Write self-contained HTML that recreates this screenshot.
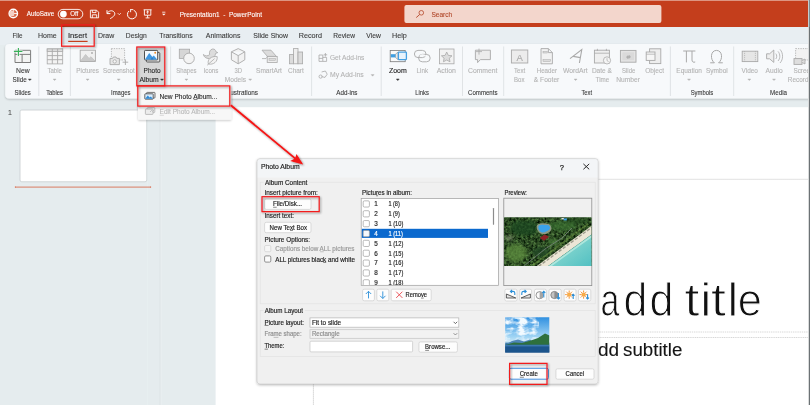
<!DOCTYPE html>
<html><head><meta charset="utf-8"><title>PowerPoint - Photo Album</title>
<style>html,body{margin:0;padding:0;background:#fff;overflow:hidden}svg{display:block;opacity:0.999}text{font-family:"Liberation Sans",sans-serif;white-space:pre}</style>
</head><body>
<svg width="810" height="405" viewBox="0 0 810 405" font-family="'Liberation Sans', sans-serif">
<defs>
<filter id="sh" x="-10%" y="-10%" width="120%" height="130%"><feGaussianBlur in="SourceAlpha" stdDeviation="1.7"/><feOffset dy="1.4"/><feComponentTransfer><feFuncA type="linear" slope="0.3"/></feComponentTransfer><feMerge><feMergeNode/><feMergeNode in="SourceGraphic"/></feMerge></filter>
<filter id="shs" x="-10%" y="-20%" width="120%" height="150%"><feGaussianBlur in="SourceAlpha" stdDeviation="1.2"/><feOffset dy="0.8"/><feComponentTransfer><feFuncA type="linear" slope="0.22"/></feComponentTransfer><feMerge><feMergeNode/><feMergeNode in="SourceGraphic"/></feMerge></filter>
<filter id="shr" x="-20%" y="-20%" width="140%" height="140%"><feGaussianBlur in="SourceAlpha" stdDeviation="0.9"/><feOffset dx="0.6" dy="0.8"/><feComponentTransfer><feFuncA type="linear" slope="0.45"/></feComponentTransfer><feMerge><feMergeNode/><feMergeNode in="SourceGraphic"/></feMerge></filter>
<filter id="trees" x="0" y="0" width="100%" height="100%" color-interpolation-filters="sRGB"><feTurbulence type="fractalNoise" baseFrequency="0.42" numOctaves="3" seed="7" result="n"/><feColorMatrix in="n" type="matrix" values="0 0.58 0 0 -0.12  0 0.76 0 0 -0.09  0 0.45 0 0 -0.09  0 0 0 0 1"/></filter>
<filter id="clouds" x="0" y="0" width="100%" height="100%" color-interpolation-filters="sRGB"><feTurbulence type="fractalNoise" baseFrequency="0.11 0.2" numOctaves="3" seed="11" result="n"/><feColorMatrix in="n" type="matrix" values="0 0 0 0 0.95  0 0 0 0 0.98  0 0 0 0 1  0 3.4 0 0 -1.35"/></filter>
<filter id="blur1"><feGaussianBlur stdDeviation="0.7"/></filter>
<filter id="blur2"><feGaussianBlur stdDeviation="1.4"/></filter>
<clipPath id="cpPhoto"><rect x="504.2" y="217.6" width="87.2" height="48.4"/></clipPath>
<clipPath id="cpLay"><rect x="505.2" y="317.3" width="44.1" height="35.2"/></clipPath>
<clipPath id="cpList"><rect x="361.5" y="199" width="136.5" height="86"/></clipPath>
<clipPath id="cpRib"><rect x="0" y="44" width="808" height="56"/></clipPath>
<linearGradient id="sky" x1="0" y1="0" x2="0" y2="1"><stop offset="0" stop-color="#2f8fe0"/><stop offset="0.55" stop-color="#9fd4f4"/><stop offset="0.7" stop-color="#cfeaf6"/><stop offset="0.72" stop-color="#3f7fae"/><stop offset="1" stop-color="#1f4f86"/></linearGradient>
<linearGradient id="sea" x1="0" y1="0" x2="1" y2="1"><stop offset="0" stop-color="#a4e4d6"/><stop offset="1" stop-color="#50bfc2"/></linearGradient>
</defs>
<rect x="0.00" y="0.00" width="810.00" height="405.00" fill="#E5ECEE"/>
<rect x="0.00" y="0.00" width="810.00" height="27.00" fill="#C43E1C"/>
<rect x="0.00" y="0.00" width="810.00" height="0.90" fill="#e0a08e"/>
<rect x="0.00" y="27.00" width="810.00" height="18.00" fill="#E8EEF2"/>
<circle cx="13.3" cy="13.5" r="4.2" fill="#d8694c" stroke="#fff" stroke-width="1.4"/>
<path d="M13.3 9.4 V13.5 H17.4" fill="none" stroke="#fff" stroke-width="0.9"/>
<rect x="9.6" y="11" width="4.6" height="5" rx="0.8" fill="#f3cfc4"/>
<text x="26.80" y="16.40" font-size="6.4" fill="#fff" stroke="#fff" stroke-width="0.1" textLength="27.50" lengthAdjust="spacingAndGlyphs" >AutoSave</text>
<rect x="58.20" y="9.40" width="24.60" height="9.40" fill="none" rx="4.7" stroke="#fff" stroke-width="0.9"/>
<circle cx="63.4" cy="14.1" r="3.35" fill="#fff"/>
<text x="70.20" y="16.40" font-size="6.4" fill="#fff" stroke="#fff" stroke-width="0.1" textLength="8.10" lengthAdjust="spacingAndGlyphs" >Off</text>
<path d="M90.4 10.2 H96.6 L98.6 12.2 V17.8 H90.4 Z M92.3 10.2 V12.6 H96 V10.2 M92.3 17.8 V14.8 H96.7 V17.8" fill="none" stroke="#fff" stroke-width="0.9"/>
<path d="M107 10.2 V13.6 H110.4 M107.2 13.4 C108.5 10.6 112.6 9.8 114.3 12.3 C115.8 14.6 113.8 16.6 110.2 18.6" fill="none" stroke="#fff" stroke-width="1.0"/>
<path d="M117.8 13.2 L119.3 14.7 L120.8 13.2" fill="none" stroke="#fff" stroke-width="0.8"/>
<path d="M133.6 10.2 A4.5 4.5 0 1 1 129 11" fill="none" stroke="#fff" stroke-width="1.0"/>
<path d="M130.6 9.2 V12.2 M130.4 9.6 H133.2" fill="none" stroke="#fff" stroke-width="0.9"/>
<path d="M143.6 9.8 H151.6 M144.4 9.8 V15.2 H150.8 V9.8 M147.6 15.2 V17.8 M145.6 17.9 H149.6 M147.6 11 V13.8 M146.4 12.2 L147.6 11 L148.8 12.2" fill="none" stroke="#fff" stroke-width="0.9"/>
<path d="M162.2 12.2 H165.4" fill="none" stroke="#fff" stroke-width="0.8"/>
<path d="M162 13.8 L163.8 15.6 L165.6 13.8 Z" fill="#fff"/>
<text x="179.80" y="16.60" font-size="6.8" fill="#fff" stroke="#fff" stroke-width="0.1" textLength="82.20" lengthAdjust="spacingAndGlyphs" >Presentation1  -  PowerPoint</text>
<rect x="404.40" y="5.00" width="257.00" height="18.00" fill="#F3D6CC" rx="2"/>
<circle cx="421.3" cy="12.8" r="2.3" fill="none" stroke="#B5482A" stroke-width="0.8"/>
<line x1="419.60" y1="14.60" x2="416.20" y2="17.60" stroke="#B5482A" stroke-width="0.9" />
<text x="431.40" y="16.60" font-size="6.7" fill="#B1482B" stroke="#B1482B" stroke-width="0.1" textLength="20.90" lengthAdjust="spacingAndGlyphs" >Search</text>
<rect x="62.00" y="27.00" width="32.00" height="18.00" fill="#E1E7EB"/>
<text x="12.50" y="38.10" font-size="7.2" fill="#3b3b3b" stroke="#3b3b3b" stroke-width="0.1" textLength="10.10" lengthAdjust="spacingAndGlyphs" >File</text>
<text x="38.00" y="38.10" font-size="7.2" fill="#3b3b3b" stroke="#3b3b3b" stroke-width="0.1" textLength="18.70" lengthAdjust="spacingAndGlyphs" >Home</text>
<text x="68.00" y="38.10" font-size="7.2" fill="#222" stroke="#222" stroke-width="0.1" textLength="19.00" lengthAdjust="spacingAndGlyphs" >Insert</text>
<text x="98.00" y="38.10" font-size="7.2" fill="#3b3b3b" stroke="#3b3b3b" stroke-width="0.1" textLength="16.20" lengthAdjust="spacingAndGlyphs" >Draw</text>
<text x="125.80" y="38.10" font-size="7.2" fill="#3b3b3b" stroke="#3b3b3b" stroke-width="0.1" textLength="21.00" lengthAdjust="spacingAndGlyphs" >Design</text>
<text x="159.20" y="38.10" font-size="7.2" fill="#3b3b3b" stroke="#3b3b3b" stroke-width="0.1" textLength="33.40" lengthAdjust="spacingAndGlyphs" >Transitions</text>
<text x="205.80" y="38.10" font-size="7.2" fill="#3b3b3b" stroke="#3b3b3b" stroke-width="0.1" textLength="34.60" lengthAdjust="spacingAndGlyphs" >Animations</text>
<text x="253.30" y="38.10" font-size="7.2" fill="#3b3b3b" stroke="#3b3b3b" stroke-width="0.1" textLength="34.70" lengthAdjust="spacingAndGlyphs" >Slide Show</text>
<text x="298.70" y="38.10" font-size="7.2" fill="#3b3b3b" stroke="#3b3b3b" stroke-width="0.1" textLength="23.30" lengthAdjust="spacingAndGlyphs" >Record</text>
<text x="333.30" y="38.10" font-size="7.2" fill="#3b3b3b" stroke="#3b3b3b" stroke-width="0.1" textLength="21.70" lengthAdjust="spacingAndGlyphs" >Review</text>
<text x="366.30" y="38.10" font-size="7.2" fill="#3b3b3b" stroke="#3b3b3b" stroke-width="0.1" textLength="14.50" lengthAdjust="spacingAndGlyphs" >View</text>
<text x="392.00" y="38.10" font-size="7.2" fill="#3b3b3b" stroke="#3b3b3b" stroke-width="0.1" textLength="14.80" lengthAdjust="spacingAndGlyphs" >Help</text>
<line x1="68.20" y1="41.40" x2="87.60" y2="41.40" stroke="#C43E1C" stroke-width="1.2" />
<g filter="url(#shs)">
<rect x="5.20" y="44.00" width="806.80" height="54.60" fill="#F7F9FB" rx="4"/>
</g>
<line x1="38.80" y1="46.50" x2="38.80" y2="96.00" stroke="#d9dde0" stroke-width="0.8" />
<line x1="70.40" y1="46.50" x2="70.40" y2="96.00" stroke="#d9dde0" stroke-width="0.8" />
<line x1="170.60" y1="46.50" x2="170.60" y2="96.00" stroke="#d9dde0" stroke-width="0.8" />
<line x1="311.60" y1="46.50" x2="311.60" y2="96.00" stroke="#d9dde0" stroke-width="0.8" />
<line x1="381.20" y1="46.50" x2="381.20" y2="96.00" stroke="#d9dde0" stroke-width="0.8" />
<line x1="462.50" y1="46.50" x2="462.50" y2="96.00" stroke="#d9dde0" stroke-width="0.8" />
<line x1="503.70" y1="46.50" x2="503.70" y2="96.00" stroke="#d9dde0" stroke-width="0.8" />
<line x1="670.40" y1="46.50" x2="670.40" y2="96.00" stroke="#d9dde0" stroke-width="0.8" />
<line x1="733.70" y1="46.50" x2="733.70" y2="96.00" stroke="#d9dde0" stroke-width="0.8" />
<path d="M15 50.3 H30.6 V62.5 H15 Z M15 54.4 H30.6 M22.1 54.4 V62.5" fill="#f3f3f3" stroke="#7d7d7d" stroke-width="1.0"/>
<path d="M18.4 47.8 V56 M13.8 51.4 H22.5" fill="none" stroke="#F7F9FB" stroke-width="2.2"/>
<path d="M18.4 48 V55.9 M13.9 51.4 H22.4" fill="none" stroke="#38b058" stroke-width="1.1"/>
<text x="16.00" y="73.40" font-size="6.5" fill="#3a3a3a" stroke="#3a3a3a" stroke-width="0.1" textLength="13.60" lengthAdjust="spacingAndGlyphs" >New</text>
<text x="12.60" y="82.40" font-size="6.5" fill="#3a3a3a" stroke="#3a3a3a" stroke-width="0.1" textLength="14.10" lengthAdjust="spacingAndGlyphs" >Slide</text>
<path d="M28.30 79.00 L29.80 80.60 L31.30 79.00 Z" fill="#3a3a3a" stroke="#3a3a3a" stroke-width="0.4" stroke-linejoin="round"/>
<text x="14.50" y="95.30" font-size="6.5" fill="#3a3a3a" stroke="#3a3a3a" stroke-width="0.1" textLength="16.30" lengthAdjust="spacingAndGlyphs" >Slides</text>
<rect x="47.20" y="48.90" width="15.50" height="15.00" fill="#f3f3f3" stroke="#a9a9a9" stroke-width="0.8"/>
<rect x="47.20" y="48.90" width="15.50" height="2.60" fill="#dcdcdc" stroke="#a9a9a9" stroke-width="0.8"/>
<line x1="52.30" y1="48.90" x2="52.30" y2="63.90" stroke="#a9a9a9" stroke-width="0.9" />
<line x1="57.60" y1="48.90" x2="57.60" y2="63.90" stroke="#a9a9a9" stroke-width="0.9" />
<line x1="47.20" y1="55.60" x2="62.70" y2="55.60" stroke="#a9a9a9" stroke-width="0.9" />
<line x1="47.20" y1="59.70" x2="62.70" y2="59.70" stroke="#a9a9a9" stroke-width="0.9" />
<text x="47.40" y="73.40" font-size="6.5" fill="#b4b4b4" stroke="#b4b4b4" stroke-width="0.1" textLength="14.60" lengthAdjust="spacingAndGlyphs" >Table</text>
<path d="M53.10 79.00 L54.60 80.60 L56.10 79.00 Z" fill="#b4b4b4" stroke="#b4b4b4" stroke-width="0.4" stroke-linejoin="round"/>
<text x="46.20" y="95.30" font-size="6.5" fill="#3a3a3a" stroke="#3a3a3a" stroke-width="0.1" textLength="16.80" lengthAdjust="spacingAndGlyphs" >Tables</text>
<rect x="80.20" y="50.20" width="15.20" height="11.20" fill="#f0f0f0" stroke="#a9a9a9" stroke-width="0.9"/>
<path d="M80.6 61 L85.6 54.6 L89 58.6 L91 56.8 L95 61 Z" fill="#dcdcdc" stroke="#a9a9a9" stroke-width="0.6"/>
<path d="M80.6 61 L85.6 54.6 L89 58.6 L91 56.8 L95 61 Z" fill="#c9c9c9"/>
<circle cx="92" cy="53" r="0.9" fill="#a9a9a9"/>
<text x="76.30" y="73.40" font-size="6.5" fill="#b4b4b4" stroke="#b4b4b4" stroke-width="0.1" textLength="22.70" lengthAdjust="spacingAndGlyphs" >Pictures</text>
<path d="M86.10 79.00 L87.60 80.60 L89.10 79.00 Z" fill="#b4b4b4" stroke="#b4b4b4" stroke-width="0.4" stroke-linejoin="round"/>
<rect x="111.40" y="48.60" width="13.20" height="11.40" fill="#f2f2f2" stroke="#a9a9a9" stroke-width="0.8" stroke-dasharray="1.3 1.1"/>
<path d="M110 58.4 H112.6 L113.4 57 H116 L116.8 58.4 H119.4 V64.6 H110 Z" fill="#e6e6e6" stroke="#a9a9a9" stroke-width="0.9"/>
<circle cx="114.7" cy="61.4" r="1.7" fill="#f6f6f6" stroke="#a9a9a9" stroke-width="0.8"/>
<path d="M125.4 59.4 V65 M122.6 62.2 H128.2" fill="none" stroke="#a9a9a9" stroke-width="0.9"/>
<text x="103.00" y="73.40" font-size="6.5" fill="#b4b4b4" stroke="#b4b4b4" stroke-width="0.1" textLength="31.70" lengthAdjust="spacingAndGlyphs" >Screenshot</text>
<path d="M117.20 79.00 L118.70 80.60 L120.20 79.00 Z" fill="#b4b4b4" stroke="#b4b4b4" stroke-width="0.4" stroke-linejoin="round"/>
<text x="111.00" y="95.30" font-size="6.5" fill="#3a3a3a" stroke="#3a3a3a" stroke-width="0.1" textLength="19.50" lengthAdjust="spacingAndGlyphs" >Images</text>
<rect x="137.00" y="47.20" width="27.80" height="38.80" fill="#D7D7D7"/>
<rect x="146.40" y="52.60" width="13.40" height="9.40" fill="#e4e4e4" rx="0.8" stroke="#4a4a4a" stroke-width="0.9"/>
<rect x="144.50" y="50.40" width="13.20" height="9.50" fill="#f4f9fe" rx="0.8" stroke="#3f3f3f" stroke-width="0.9"/>
<path d="M145 59.4 L149.2 53 L152.2 57 L153.8 55.4 L157.2 59.4 Z" fill="#3f97e2"/>
<path d="M149.2 53 L152.2 57 L150.6 59.4 H153.6 L149.2 53 Z" fill="#2a7cc8"/>
<circle cx="155.2" cy="52.7" r="0.95" fill="#f08a24"/>
<text x="143.60" y="73.40" font-size="6.5" fill="#262626" stroke="#262626" stroke-width="0.1" textLength="17.00" lengthAdjust="spacingAndGlyphs" >Photo</text>
<text x="139.40" y="82.40" font-size="6.5" fill="#262626" stroke="#262626" stroke-width="0.1" textLength="19.30" lengthAdjust="spacingAndGlyphs" >Album</text>
<path d="M160.50 79.00 L162.00 80.60 L163.50 79.00 Z" fill="#262626" stroke="#262626" stroke-width="0.4" stroke-linejoin="round"/>
<rect x="179.30" y="49.20" width="10.30" height="9.20" fill="#d6d6d6" stroke="#a9a9a9" stroke-width="0.8"/>
<circle cx="189" cy="58.4" r="5.3" fill="#f4f4f4" stroke="#a9a9a9" stroke-width="0.9"/>
<text x="176.20" y="73.40" font-size="6.5" fill="#b4b4b4" stroke="#b4b4b4" stroke-width="0.1" textLength="20.30" lengthAdjust="spacingAndGlyphs" >Shapes</text>
<path d="M184.90 79.00 L186.40 80.60 L187.90 79.00 Z" fill="#b4b4b4" stroke="#b4b4b4" stroke-width="0.4" stroke-linejoin="round"/>
<path d="M203.4 54.4 C205 56.4 208 56.2 209.6 54.6 C209 52 210 49.4 212.6 49 C214.6 48.8 215.8 50.2 215.8 51.6 L217.8 52.6 L215.6 53.4 C215.4 56.6 212.6 58.8 209.4 58.6 C206 58.6 203.6 56.8 203.4 54.4 Z" fill="#dcdcdc" stroke="#a9a9a9" stroke-width="0.8"/>
<path d="M208.4 64 C207 59.6 211 55.8 217.2 56.6 C217.8 61.6 213.6 65 208.4 64 Z M207.2 65.2 L214.6 58.6" fill="#f2f2f2" stroke="#a9a9a9" stroke-width="0.8"/>
<text x="203.60" y="73.40" font-size="6.5" fill="#b4b4b4" stroke="#b4b4b4" stroke-width="0.1" textLength="14.80" lengthAdjust="spacingAndGlyphs" >Icons</text>
<path d="M238.2 48.6 L244.8 51.8 V59.8 L238.2 63.8 L231.4 59.8 V51.8 Z M231.4 51.8 L238.2 55.6 L244.8 51.8 M238.2 55.6 V63.8" fill="#f2f2f2" stroke="#a9a9a9" stroke-width="0.9"/>
<text x="234.40" y="73.40" font-size="6.5" fill="#b4b4b4" stroke="#b4b4b4" stroke-width="0.1" textLength="7.50" lengthAdjust="spacingAndGlyphs" >3D</text>
<text x="224.80" y="82.40" font-size="6.5" fill="#b4b4b4" stroke="#b4b4b4" stroke-width="0.1" textLength="21.20" lengthAdjust="spacingAndGlyphs" >Models</text>
<path d="M248.70 79.00 L250.20 80.60 L251.70 79.00 Z" fill="#b4b4b4" stroke="#b4b4b4" stroke-width="0.4" stroke-linejoin="round"/>
<path d="M262 50.2 H271 L276.4 56.4 H267.4 Z" fill="#dcdcdc" stroke="#a9a9a9" stroke-width="0.8"/>
<path d="M262 58.6 H266 L267.6 56.6" fill="none" stroke="#a9a9a9" stroke-width="0.8"/>
<rect x="267.20" y="56.40" width="10.00" height="6.00" fill="#eeeeee" stroke="#a9a9a9" stroke-width="0.8"/>
<rect x="269.00" y="58.40" width="6.40" height="2.00" fill="#dcdcdc" stroke="#a9a9a9" stroke-width="0.5"/>
<text x="256.00" y="73.40" font-size="6.5" fill="#b4b4b4" stroke="#b4b4b4" stroke-width="0.1" textLength="25.90" lengthAdjust="spacingAndGlyphs" >SmartArt</text>
<rect x="289.40" y="54.60" width="4.20" height="9.20" fill="#dcdcdc" stroke="#a9a9a9" stroke-width="0.8"/>
<rect x="293.60" y="48.40" width="4.40" height="15.40" fill="#eee" stroke="#a9a9a9" stroke-width="0.8"/>
<rect x="298.00" y="52.00" width="4.60" height="11.80" fill="#dcdcdc" stroke="#a9a9a9" stroke-width="0.8"/>
<text x="288.00" y="73.40" font-size="6.5" fill="#b4b4b4" stroke="#b4b4b4" stroke-width="0.1" textLength="15.80" lengthAdjust="spacingAndGlyphs" >Chart</text>
<text x="225.70" y="95.30" font-size="6.5" fill="#3a3a3a" stroke="#3a3a3a" stroke-width="0.1" textLength="32.30" lengthAdjust="spacingAndGlyphs" >Illustrations</text>
<path d="M319 55 H322.8 V61.4 H319 Z M322.8 57.4 H326.6 V61.4 H322.8 M319 58.4 H322.8 M325.4 53 V56.6 M323.6 54.8 H327.2" fill="none" stroke="#a9a9a9" stroke-width="0.8"/>
<text x="330.00" y="59.70" font-size="6.5" fill="#b4b4b4" stroke="#b4b4b4" stroke-width="0.1" textLength="34.40" lengthAdjust="spacingAndGlyphs" >Get Add-ins</text>
<path d="M321.6 72 L325.4 71 L327.2 74.2 L325 77.4 L321.6 76.6 M319 76.6 a1.6 1.6 0 1 0 3.2 0 a1.6 1.6 0 1 0 -3.2 0" fill="none" stroke="#a9a9a9" stroke-width="0.8"/>
<text x="330.00" y="77.00" font-size="6.5" fill="#b4b4b4" stroke="#b4b4b4" stroke-width="0.1" textLength="33.70" lengthAdjust="spacingAndGlyphs" >My Add-ins</text>
<path d="M371.10 74.60 L372.60 76.20 L374.10 74.60 Z" fill="#b4b4b4" stroke="#b4b4b4" stroke-width="0.4" stroke-linejoin="round"/>
<text x="336.30" y="95.30" font-size="6.5" fill="#3a3a3a" stroke="#3a3a3a" stroke-width="0.1" textLength="21.20" lengthAdjust="spacingAndGlyphs" >Add-ins</text>
<rect x="390.20" y="50.50" width="15.00" height="11.20" fill="#fafafa" stroke="#7a7a7a" stroke-width="0.8"/>
<path d="M395.4 54.2 L398.2 52 V59.8 L395.4 57.4 Z" fill="#e9e9e9" stroke="#8a8a8a" stroke-width="0.6"/>
<rect x="390.80" y="54.20" width="4.60" height="3.20" fill="#3f9fe2"/>
<rect x="398.40" y="52.20" width="8.00" height="7.40" fill="#e8f3fc" rx="0.5" stroke="#46a0e2" stroke-width="1.3"/>
<text x="388.90" y="73.40" font-size="6.5" fill="#222" stroke="#222" stroke-width="0.1" textLength="17.80" lengthAdjust="spacingAndGlyphs" >Zoom</text>
<path d="M396.4 79 L397.8 80.6 L399.2 79 Z" fill="#333" stroke="#333" stroke-width="0.5"/>
<rect x="414.40" y="50.40" width="11.60" height="7.20" fill="none" rx="3.6" stroke="#a9a9a9" stroke-width="0.9"/>
<rect x="418.60" y="54.40" width="11.60" height="7.40" fill="none" rx="3.7" stroke="#a9a9a9" stroke-width="0.9"/>
<path d="M420 56.2 C421.4 54.6 424.6 54.6 425.8 56.2" fill="none" stroke="#F7F9FB" stroke-width="1.6"/>
<text x="416.60" y="73.40" font-size="6.5" fill="#b4b4b4" stroke="#b4b4b4" stroke-width="0.1" textLength="11.40" lengthAdjust="spacingAndGlyphs" >Link</text>
<rect x="439.40" y="49.00" width="14.60" height="14.80" fill="#f2f2f2" stroke="#a9a9a9" stroke-width="0.8"/>
<path d="M446.7 52 L448.3 55.4 L452 55.8 L449.3 58.2 L450 61.8 L446.7 60 L443.4 61.8 L444.1 58.2 L441.4 55.8 L445.1 55.4 Z" fill="#dcdcdc" stroke="#a9a9a9" stroke-width="0.8"/>
<text x="436.70" y="73.40" font-size="6.5" fill="#b4b4b4" stroke="#b4b4b4" stroke-width="0.1" textLength="19.30" lengthAdjust="spacingAndGlyphs" >Action</text>
<text x="415.30" y="95.30" font-size="6.5" fill="#3a3a3a" stroke="#3a3a3a" stroke-width="0.1" textLength="13.60" lengthAdjust="spacingAndGlyphs" >Links</text>
<path d="M475.4 50.2 H490.4 V59.6 H480.4 L477.6 62.6 V59.6 H475.4 Z" fill="#ececec" stroke="#a9a9a9" stroke-width="0.9"/>
<path d="M479 48.6 V54.6 M476 51.6 H482" fill="none" stroke="#a9a9a9" stroke-width="0.8"/>
<text x="468.00" y="73.40" font-size="6.5" fill="#b4b4b4" stroke="#b4b4b4" stroke-width="0.1" textLength="29.50" lengthAdjust="spacingAndGlyphs" >Comment</text>
<text x="468.00" y="95.30" font-size="6.5" fill="#3a3a3a" stroke="#3a3a3a" stroke-width="0.1" textLength="29.50" lengthAdjust="spacingAndGlyphs" >Comments</text>
<rect x="511.40" y="50.00" width="16.40" height="13.00" fill="#ececec" stroke="#a9a9a9" stroke-width="0.9"/>
<text x="516.60" y="61.20" font-size="9" fill="#a9a9a9" stroke="#a9a9a9" stroke-width="0.1" textLength="6.40" lengthAdjust="spacingAndGlyphs" >A</text>
<text x="514.00" y="73.40" font-size="6.5" fill="#b4b4b4" stroke="#b4b4b4" stroke-width="0.1" textLength="11.20" lengthAdjust="spacingAndGlyphs" >Text</text>
<text x="514.00" y="82.40" font-size="6.5" fill="#b4b4b4" stroke="#b4b4b4" stroke-width="0.1" textLength="10.40" lengthAdjust="spacingAndGlyphs" >Box</text>
<path d="M541 48.6 H548.4 L552.4 52.6 V63.8 H541 Z M548.4 48.6 V52.6 H552.4" fill="#f2f2f2" stroke="#a9a9a9" stroke-width="0.9"/>
<rect x="543.00" y="51.40" width="4.20" height="1.60" fill="#dcdcdc" stroke="#a9a9a9" stroke-width="0.5"/>
<rect x="543.00" y="59.60" width="7.40" height="2.00" fill="#dcdcdc" stroke="#a9a9a9" stroke-width="0.5"/>
<text x="536.70" y="73.40" font-size="6.5" fill="#b4b4b4" stroke="#b4b4b4" stroke-width="0.1" textLength="20.30" lengthAdjust="spacingAndGlyphs" >Header</text>
<text x="533.80" y="82.40" font-size="6.5" fill="#b4b4b4" stroke="#b4b4b4" stroke-width="0.1" textLength="25.50" lengthAdjust="spacingAndGlyphs" >&amp; Footer</text>
<path d="M570 58.6 L581.8 49.6 L579.4 63 M573.2 56.4 L580.4 57.6" fill="none" stroke="#a9a9a9" stroke-width="1.1"/>
<text x="563.00" y="73.40" font-size="6.5" fill="#b4b4b4" stroke="#b4b4b4" stroke-width="0.1" textLength="24.70" lengthAdjust="spacingAndGlyphs" >WordArt</text>
<path d="M574.10 79.00 L575.60 80.60 L577.10 79.00 Z" fill="#b4b4b4" stroke="#b4b4b4" stroke-width="0.4" stroke-linejoin="round"/>
<rect x="594.40" y="50.20" width="15.00" height="12.80" fill="#efefef" stroke="#a9a9a9" stroke-width="0.9"/>
<line x1="594.40" y1="53.20" x2="609.40" y2="53.20" stroke="#a9a9a9" stroke-width="0.8" />
<path d="M597.4 48.8 V51 M606.4 48.8 V51" fill="none" stroke="#a9a9a9" stroke-width="0.8"/>
<circle cx="607" cy="60.4" r="3.6" fill="#f4f4f4" stroke="#a9a9a9" stroke-width="0.8"/>
<path d="M607 58.2 V60.6 L608.6 61.6" fill="none" stroke="#a9a9a9" stroke-width="0.7"/>
<text x="591.90" y="73.40" font-size="6.5" fill="#b4b4b4" stroke="#b4b4b4" stroke-width="0.1" textLength="20.00" lengthAdjust="spacingAndGlyphs" >Date &amp;</text>
<text x="595.60" y="82.40" font-size="6.5" fill="#b4b4b4" stroke="#b4b4b4" stroke-width="0.1" textLength="13.70" lengthAdjust="spacingAndGlyphs" >Time</text>
<text x="581.50" y="95.30" font-size="6.5" fill="#3a3a3a" stroke="#3a3a3a" stroke-width="0.1" textLength="10.50" lengthAdjust="spacingAndGlyphs" >Text</text>
<rect x="620.40" y="50.40" width="15.60" height="11.80" fill="#e4e4e4" stroke="#a9a9a9" stroke-width="0.9"/>
<rect x="622.40" y="52.40" width="11.60" height="7.80" fill="#dadada"/>
<text x="626.40" y="58.60" font-size="6" fill="#a9a9a9" stroke="#a9a9a9" stroke-width="0.1" textLength="4.00" lengthAdjust="spacingAndGlyphs" >#</text>
<text x="622.00" y="73.40" font-size="6.5" fill="#b4b4b4" stroke="#b4b4b4" stroke-width="0.1" textLength="13.30" lengthAdjust="spacingAndGlyphs" >Slide</text>
<text x="616.30" y="82.40" font-size="6.5" fill="#b4b4b4" stroke="#b4b4b4" stroke-width="0.1" textLength="23.70" lengthAdjust="spacingAndGlyphs" >Number</text>
<rect x="649.60" y="48.80" width="11.20" height="14.80" fill="#eeeeee" stroke="#a9a9a9" stroke-width="0.9"/>
<rect x="646.20" y="52.00" width="8.80" height="8.40" fill="#f6f6f6" stroke="#a9a9a9" stroke-width="0.9"/>
<line x1="646.20" y1="54.20" x2="655.00" y2="54.20" stroke="#a9a9a9" stroke-width="0.7" />
<text x="645.20" y="73.40" font-size="6.5" fill="#b4b4b4" stroke="#b4b4b4" stroke-width="0.1" textLength="18.80" lengthAdjust="spacingAndGlyphs" >Object</text>
<path d="M683.2 51 H695.4 M686.4 51 V62.4 M692 51 V60 C692 62 693.4 62.6 695.2 62" fill="none" stroke="#a9a9a9" stroke-width="1.0"/>
<text x="676.30" y="73.40" font-size="6.5" fill="#b4b4b4" stroke="#b4b4b4" stroke-width="0.1" textLength="25.70" lengthAdjust="spacingAndGlyphs" >Equation</text>
<path d="M687.50 79.00 L689.00 80.60 L690.50 79.00 Z" fill="#b4b4b4" stroke="#b4b4b4" stroke-width="0.4" stroke-linejoin="round"/>
<path d="M710.2 62.8 H714.4 C710 59.6 710.4 50.4 716.5 50.4 C722.6 50.4 723 59.6 718.6 62.8 H722.8" fill="none" stroke="#a9a9a9" stroke-width="1.0"/>
<text x="706.00" y="73.40" font-size="6.5" fill="#b4b4b4" stroke="#b4b4b4" stroke-width="0.1" textLength="21.80" lengthAdjust="spacingAndGlyphs" >Symbol</text>
<text x="690.70" y="95.30" font-size="6.5" fill="#3a3a3a" stroke="#3a3a3a" stroke-width="0.1" textLength="22.60" lengthAdjust="spacingAndGlyphs" >Symbols</text>
<rect x="742.20" y="51.20" width="15.60" height="10.40" fill="#e6e6e6" stroke="#a9a9a9" stroke-width="0.9"/>
<line x1="744.60" y1="51.20" x2="744.60" y2="61.60" stroke="#a9a9a9" stroke-width="0.7" stroke-dasharray="1 0.9"/>
<line x1="755.40" y1="51.20" x2="755.40" y2="61.60" stroke="#a9a9a9" stroke-width="0.7" stroke-dasharray="1 0.9"/>
<text x="741.60" y="73.40" font-size="6.5" fill="#b4b4b4" stroke="#b4b4b4" stroke-width="0.1" textLength="16.30" lengthAdjust="spacingAndGlyphs" >Video</text>
<path d="M747.80 79.00 L749.30 80.60 L750.80 79.00 Z" fill="#b4b4b4" stroke="#b4b4b4" stroke-width="0.4" stroke-linejoin="round"/>
<path d="M766.6 53.8 H769.6 L773.8 50 V62.4 L769.6 58.8 H766.6 Z" fill="#eeeeee" stroke="#a9a9a9" stroke-width="0.9"/>
<path d="M775.8 53.6 C777 55 777 57.6 775.8 59 M778 51.4 C780.4 54 780.4 58.6 778 61 M780 49.4 C783.4 53 783.4 59.6 780 63" fill="none" stroke="#a9a9a9" stroke-width="0.8"/>
<text x="765.60" y="73.40" font-size="6.5" fill="#b4b4b4" stroke="#b4b4b4" stroke-width="0.1" textLength="17.00" lengthAdjust="spacingAndGlyphs" >Audio</text>
<path d="M772.50 79.00 L774.00 80.60 L775.50 79.00 Z" fill="#b4b4b4" stroke="#b4b4b4" stroke-width="0.4" stroke-linejoin="round"/>
<g clip-path="url(#cpRib)">
<rect x="795.60" y="48.60" width="16.40" height="11.40" fill="#f2f2f2" stroke="#a9a9a9" stroke-width="0.8" stroke-dasharray="1.3 1.1"/>
<rect x="794.00" y="58.60" width="8.00" height="5.80" fill="#dedede" stroke="#a9a9a9" stroke-width="0.9"/>
<path d="M802 60.6 L805 59 V64 L802 62.4" fill="#dedede" stroke="#a9a9a9" stroke-width="0.8"/>
<text x="793.40" y="73.40" font-size="6.5" fill="#b4b4b4" stroke="#b4b4b4" stroke-width="0.1" textLength="20.30" lengthAdjust="spacingAndGlyphs" >Screen</text>
<text x="787.80" y="82.40" font-size="6.5" fill="#b4b4b4" stroke="#b4b4b4" stroke-width="0.1" textLength="29.20" lengthAdjust="spacingAndGlyphs" >Recording</text>
</g>
<text x="770.00" y="95.30" font-size="6.5" fill="#3a3a3a" stroke="#3a3a3a" stroke-width="0.1" textLength="17.00" lengthAdjust="spacingAndGlyphs" >Media</text>
<line x1="147.80" y1="108.00" x2="147.80" y2="405.00" stroke="#eaf0f1" stroke-width="0.8" />
<line x1="160.20" y1="100.00" x2="160.20" y2="405.00" stroke="#d6dde0" stroke-width="0.8" />
<line x1="161.00" y1="100.00" x2="161.00" y2="405.00" stroke="#edf2f3" stroke-width="0.8" />
<rect x="20.00" y="110.00" width="126.80" height="71.80" fill="#fff" rx="1.8" stroke="#ccd1d4" stroke-width="0.9"/>
<text x="7.80" y="115.00" font-size="7.8" fill="#4a4a4a" >1</text>
<line x1="15.40" y1="187.10" x2="150.60" y2="187.10" stroke="#d8603f" stroke-width="0.8" />
<line x1="15.40" y1="186.40" x2="15.40" y2="187.80" stroke="#d8603f" stroke-width="0.8" />
<line x1="150.60" y1="186.40" x2="150.60" y2="187.80" stroke="#d8603f" stroke-width="0.8" />
<rect x="215.60" y="107.20" width="594.40" height="297.80" fill="#fff"/>
<line x1="313.40" y1="179.30" x2="810.00" y2="179.30" stroke="#b9b9b9" stroke-width="0.7" stroke-dasharray="1.2 0.8"/>
<line x1="313.40" y1="332.00" x2="810.00" y2="332.00" stroke="#d4d4d4" stroke-width="0.9" stroke-dasharray="1.4 0.8"/>
<line x1="313.40" y1="337.50" x2="810.00" y2="337.50" stroke="#bdbdbd" stroke-width="0.6" stroke-dasharray="1.2 0.6"/>
<line x1="313.40" y1="337.50" x2="313.40" y2="405.00" stroke="#b0b0b0" stroke-width="0.7" stroke-dasharray="1.2 0.8"/>
<text y="316.00" font-size="47" fill="#111" stroke="#fff" stroke-width="1.1"><tspan x="446.30" textLength="73.76" lengthAdjust="spacingAndGlyphs">Click</tspan> <tspan x="534.17" textLength="45.98" lengthAdjust="spacingAndGlyphs">to</tspan> <tspan x="600.54" textLength="18.90" lengthAdjust="spacingAndGlyphs">a</tspan><tspan x="623.58" textLength="23.85" lengthAdjust="spacingAndGlyphs">d</tspan><tspan x="649.38" textLength="23.98" lengthAdjust="spacingAndGlyphs">d</tspan> <tspan x="684.27" textLength="15.36" lengthAdjust="spacingAndGlyphs">t</tspan><tspan x="700.01" textLength="11.60" lengthAdjust="spacingAndGlyphs">i</tspan><tspan x="710.87" textLength="15.36" lengthAdjust="spacingAndGlyphs">t</tspan><tspan x="727.15" textLength="11.11" lengthAdjust="spacingAndGlyphs">l</tspan><tspan x="737.76" textLength="24.14" lengthAdjust="spacingAndGlyphs">e</tspan></text>
<text y="356.00" font-size="17.5" fill="#151515" stroke="#151515" stroke-width="0.12" ><tspan x="527.34" textLength="28.68" lengthAdjust="spacingAndGlyphs">Click</tspan> <tspan x="560.75" textLength="13.90" lengthAdjust="spacingAndGlyphs">to</tspan> <tspan x="579.38" textLength="8.64" lengthAdjust="spacingAndGlyphs">a</tspan><tspan x="597.94" textLength="21.14" lengthAdjust="spacingAndGlyphs">dd</tspan> <tspan x="623.04" textLength="59.27" lengthAdjust="spacingAndGlyphs">subtitle</tspan></text>
<g filter="url(#shs)">
<rect x="138.00" y="86.20" width="93.40" height="33.60" fill="#f7f7f7" rx="1.5"/>
</g>
<rect x="146.60" y="92.40" width="8.40" height="5.60" fill="#e8e8e8" rx="0.6" stroke="#555" stroke-width="0.8"/>
<rect x="144.80" y="93.80" width="8.40" height="5.40" fill="#d9ecfb" rx="0.6" stroke="#444" stroke-width="0.8"/>
<path d="M145.2 98.8 L147.8 95.6 L149.6 97.6 L150.8 96.6 L152.8 98.8 Z" fill="#2f8ad6"/>
<text x="159.40" y="98.60" font-size="6.6" fill="#262626" stroke="#262626" stroke-width="0.1" textLength="58.00" lengthAdjust="spacingAndGlyphs" >New Photo Album...</text>
<line x1="193.64" y1="99.55" x2="197.48" y2="99.55" stroke="#262626" stroke-width="0.55" />
<rect x="147.20" y="107.60" width="7.60" height="5.00" fill="#f0f0f0" rx="0.6" stroke="#b5b5b5" stroke-width="0.8"/>
<rect x="145.40" y="109.00" width="7.60" height="5.40" fill="#ececec" rx="0.6" stroke="#b0b0b0" stroke-width="0.8"/>
<path d="M150 112 l1.6 -1.6 l1 1 l1.6 -1.4" fill="none" stroke="#b0b0b0" stroke-width="0.7"/>
<text x="159.60" y="114.30" font-size="6.5" fill="#b9b9b9" stroke="#b9b9b9" stroke-width="0.1" textLength="55.60" lengthAdjust="spacingAndGlyphs" >Edit Photo Album...</text>
<line x1="159.70" y1="115.25" x2="163.86" y2="115.25" stroke="#b9b9b9" stroke-width="0.55" />
<g filter="url(#sh)">
<rect x="257.00" y="158.60" width="341.20" height="225.40" fill="#F0F0F0" rx="3"/>
</g>
<path d="M257 177.6 V161.6 a3 3 0 0 1 3 -3 H595.2 a3 3 0 0 1 3 3 V177.6 Z" fill="#F3F5F7"/>
<rect x="257.00" y="158.60" width="341.20" height="225.40" fill="none" rx="3" stroke="#c9c9c9" stroke-width="0.6"/>
<text x="261.00" y="169.30" font-size="6.8" fill="#222" stroke="#222" stroke-width="0.17" textLength="38.60" lengthAdjust="spacingAndGlyphs" >Photo Album</text>
<text x="559.80" y="169.50" font-size="7.6" fill="#222" stroke="#222" stroke-width="0.25" >?</text>
<path d="M583.4 163.9 L589.2 169.3 M589.2 163.9 L583.4 169.3" fill="none" stroke="#2a2a2a" stroke-width="1.0"/>
<rect x="260.20" y="182.20" width="335.00" height="121.60" fill="none" stroke="#e2e2e2" stroke-width="0.7"/>
<rect x="263.60" y="179.00" width="45.40" height="7.00" fill="#F0F0F0"/>
<text x="265.10" y="185.00" font-size="6.35" fill="#262626" stroke="#262626" stroke-width="0.17" textLength="42.30" lengthAdjust="spacingAndGlyphs" >Album Content</text>
<rect x="260.20" y="310.40" width="335.00" height="46.00" fill="none" stroke="#e2e2e2" stroke-width="0.7"/>
<rect x="263.60" y="307.00" width="41.40" height="7.00" fill="#F0F0F0"/>
<text x="264.80" y="313.40" font-size="6.35" fill="#262626" stroke="#262626" stroke-width="0.17" textLength="38.20" lengthAdjust="spacingAndGlyphs" >Album Layout</text>
<text x="264.50" y="194.70" font-size="6.35" fill="#262626" stroke="#262626" stroke-width="0.17" textLength="53.40" lengthAdjust="spacingAndGlyphs" >Insert picture from:</text>
<rect x="264.60" y="199.00" width="46.40" height="10.40" fill="#fdfdfd" rx="1.6" stroke="#d2d2d2" stroke-width="0.8"/>
<text x="273.00" y="206.30" font-size="6.35" fill="#262626" stroke="#262626" stroke-width="0.17" textLength="29.10" lengthAdjust="spacingAndGlyphs" >File/Disk...</text>
<line x1="273.10" y1="207.25" x2="276.71" y2="207.25" stroke="#262626" stroke-width="0.55" />
<text x="264.50" y="217.70" font-size="6.35" fill="#262626" stroke="#262626" stroke-width="0.17" textLength="29.50" lengthAdjust="spacingAndGlyphs" >Insert text:</text>
<rect x="264.60" y="222.30" width="46.40" height="10.40" fill="#fdfdfd" rx="1.6" stroke="#d2d2d2" stroke-width="0.8"/>
<text x="269.60" y="229.50" font-size="6.35" fill="#262626" stroke="#262626" stroke-width="0.17" textLength="37.40" lengthAdjust="spacingAndGlyphs" >New Text Box</text>
<line x1="290.05" y1="230.45" x2="292.92" y2="230.45" stroke="#262626" stroke-width="0.55" />
<text x="264.50" y="241.50" font-size="6.35" fill="#262626" stroke="#262626" stroke-width="0.17" textLength="45.50" lengthAdjust="spacingAndGlyphs" >Picture Options:</text>
<rect x="264.60" y="245.50" width="6.20" height="6.20" fill="#f6f6f6" rx="1.2" stroke="#cfcfcf" stroke-width="0.7"/>
<text x="275.20" y="250.80" font-size="6.35" fill="#9a9a9a" stroke="#9a9a9a" stroke-width="0.17" textLength="79.20" lengthAdjust="spacingAndGlyphs" >Captions below ALL pictures</text>
<line x1="320.09" y1="251.75" x2="323.74" y2="251.75" stroke="#9a9a9a" stroke-width="0.55" />
<rect x="264.60" y="255.90" width="6.20" height="6.20" fill="#fbfbfb" rx="1.2" stroke="#777" stroke-width="0.8"/>
<text x="275.20" y="261.50" font-size="6.35" fill="#262626" stroke="#262626" stroke-width="0.17" textLength="79.70" lengthAdjust="spacingAndGlyphs" >ALL pictures black and white</text>
<line x1="323.24" y1="262.45" x2="326.18" y2="262.45" stroke="#262626" stroke-width="0.55" />
<text x="362.00" y="194.80" font-size="6.35" fill="#262626" stroke="#262626" stroke-width="0.17" textLength="50.00" lengthAdjust="spacingAndGlyphs" >Pictures in album:</text>
<line x1="376.09" y1="195.75" x2="377.98" y2="195.75" stroke="#262626" stroke-width="0.55" />
<rect x="361.20" y="198.60" width="137.20" height="86.70" fill="#fff" stroke="#9d9d9d" stroke-width="0.7"/>
<g clip-path="url(#cpList)">
<rect x="361.60" y="228.80" width="126.40" height="9.10" fill="#0B69CE"/>
<rect x="363.20" y="200.85" width="6.20" height="6.20" fill="#fff" rx="1.2" stroke="#9c9c9c" stroke-width="0.7"/>
<text x="374.20" y="206.20" font-size="6.35" fill="#262626" stroke="#262626" stroke-width="0.17" >1</text>
<text x="388.40" y="206.20" font-size="6.35" fill="#262626" stroke="#262626" stroke-width="0.17" textLength="11.40" lengthAdjust="spacingAndGlyphs" >1 (8)</text>
<rect x="363.20" y="210.71" width="6.20" height="6.20" fill="#fff" rx="1.2" stroke="#9c9c9c" stroke-width="0.7"/>
<text x="374.20" y="216.06" font-size="6.35" fill="#262626" stroke="#262626" stroke-width="0.17" >2</text>
<text x="388.40" y="216.06" font-size="6.35" fill="#262626" stroke="#262626" stroke-width="0.17" textLength="11.40" lengthAdjust="spacingAndGlyphs" >1 (9)</text>
<rect x="363.20" y="220.57" width="6.20" height="6.20" fill="#fff" rx="1.2" stroke="#9c9c9c" stroke-width="0.7"/>
<text x="374.20" y="225.92" font-size="6.35" fill="#262626" stroke="#262626" stroke-width="0.17" >3</text>
<text x="388.40" y="225.92" font-size="6.35" fill="#262626" stroke="#262626" stroke-width="0.17" textLength="14.90" lengthAdjust="spacingAndGlyphs" >1 (10)</text>
<rect x="363.20" y="230.43" width="6.20" height="6.20" fill="#f4f8fd" rx="1.2" stroke="#9c9c9c" stroke-width="0.7"/>
<text x="374.20" y="235.78" font-size="6.35" fill="#fff" stroke="#fff" stroke-width="0.17" >4</text>
<text x="388.40" y="235.78" font-size="6.35" fill="#fff" stroke="#fff" stroke-width="0.17" textLength="14.60" lengthAdjust="spacingAndGlyphs" >1 (11)</text>
<rect x="363.20" y="240.29" width="6.20" height="6.20" fill="#fff" rx="1.2" stroke="#9c9c9c" stroke-width="0.7"/>
<text x="374.20" y="245.64" font-size="6.35" fill="#262626" stroke="#262626" stroke-width="0.17" >5</text>
<text x="388.40" y="245.64" font-size="6.35" fill="#262626" stroke="#262626" stroke-width="0.17" textLength="14.90" lengthAdjust="spacingAndGlyphs" >1 (12)</text>
<rect x="363.20" y="250.15" width="6.20" height="6.20" fill="#fff" rx="1.2" stroke="#9c9c9c" stroke-width="0.7"/>
<text x="374.20" y="255.50" font-size="6.35" fill="#262626" stroke="#262626" stroke-width="0.17" >6</text>
<text x="388.40" y="255.50" font-size="6.35" fill="#262626" stroke="#262626" stroke-width="0.17" textLength="14.90" lengthAdjust="spacingAndGlyphs" >1 (15)</text>
<rect x="363.20" y="260.01" width="6.20" height="6.20" fill="#fff" rx="1.2" stroke="#9c9c9c" stroke-width="0.7"/>
<text x="374.20" y="265.36" font-size="6.35" fill="#262626" stroke="#262626" stroke-width="0.17" >7</text>
<text x="388.40" y="265.36" font-size="6.35" fill="#262626" stroke="#262626" stroke-width="0.17" textLength="14.90" lengthAdjust="spacingAndGlyphs" >1 (16)</text>
<rect x="363.20" y="269.87" width="6.20" height="6.20" fill="#fff" rx="1.2" stroke="#9c9c9c" stroke-width="0.7"/>
<text x="374.20" y="275.22" font-size="6.35" fill="#262626" stroke="#262626" stroke-width="0.17" >8</text>
<text x="388.40" y="275.22" font-size="6.35" fill="#262626" stroke="#262626" stroke-width="0.17" textLength="14.90" lengthAdjust="spacingAndGlyphs" >1 (17)</text>
<rect x="363.20" y="279.73" width="6.20" height="6.20" fill="#fff" rx="1.2" stroke="#9c9c9c" stroke-width="0.7"/>
<text x="374.20" y="285.08" font-size="6.35" fill="#262626" stroke="#262626" stroke-width="0.17" >9</text>
<text x="388.40" y="285.08" font-size="6.35" fill="#262626" stroke="#262626" stroke-width="0.17" textLength="14.90" lengthAdjust="spacingAndGlyphs" >1 (18)</text>
</g>
<rect x="492.90" y="208.00" width="1.20" height="16.80" fill="#8c8c8c" rx="0.6"/>
<text x="504.50" y="195.00" font-size="6.35" fill="#262626" stroke="#262626" stroke-width="0.17" textLength="22.50" lengthAdjust="spacingAndGlyphs" >Preview:</text>
<rect x="503.80" y="198.20" width="88.00" height="87.40" fill="#F0F0F0" stroke="#8f8f8f" stroke-width="0.8"/>
<g clip-path="url(#cpPhoto)">
<rect x="504.00" y="217.00" width="88.00" height="50.00" fill="#2e5a2b"/>
<rect x="504" y="217" width="88" height="50" filter="url(#trees)"/>
<g filter="url(#blur2)" opacity="0.75">
<ellipse cx="516" cy="253" rx="11" ry="9" fill="#5f8f40"/>
<ellipse cx="524" cy="228" rx="14" ry="8" fill="#1f4a20"/>
<ellipse cx="562" cy="226" rx="14" ry="5" fill="#3b7032"/>
<ellipse cx="578" cy="221" rx="12" ry="3" fill="#254f24"/>
<ellipse cx="541" cy="252" rx="9" ry="5" fill="#234a27"/>
<ellipse cx="509" cy="238" rx="4" ry="2.4" fill="#7f8f70"/>
<ellipse cx="553" cy="242" rx="6" ry="3.4" fill="#4a7d3a"/>
</g>
<g filter="url(#blur1)">
<path d="M524 266 L545 249 L562 238 L572 228" fill="none" stroke="#76857a" stroke-width="1.0" opacity="0.8"/>
<path d="M537 225.2 C539 222.6 545 222.8 548.6 224 C552.4 225.4 552 230.6 549.2 232.2 C546.8 233.6 545.6 234.4 542.6 234 C538.6 233.6 535.6 228.6 537 225.2 Z" fill="#8d9a84"/>
<path d="M538.6 225.8 C541 224 544.6 224.8 547.2 225 C550.4 225.4 551 228.8 548.6 230.2 C546.2 231.4 545.2 232.6 542.6 232.4 C539.6 232.2 537.6 228.6 538.6 225.8 Z" fill="#3aa3ea"/>
<path d="M539.8 238 L544.6 234.6 L549 236.8 L544 240.8 Z" fill="#8f2026"/>
<rect x="563.60" y="218.40" width="3.20" height="2.00" fill="#3aa3ea"/>
<rect x="561.40" y="218.00" width="2.40" height="1.40" fill="#e4e4e4"/>
<path d="M535.5 267 L592 225.4 V234.2 L546.8 267 Z" fill="#ece6d6"/>
<path d="M546.8 267 L592 234.2 V267 Z" fill="url(#sea)"/>
<path d="M549 267 L592 236" fill="none" stroke="#c4efe4" stroke-width="1.6" opacity="0.7"/>
<path d="M538.6 266.4 L591.6 227.4" fill="none" stroke="#5a5c4c" stroke-width="1.4" stroke-dasharray="3.4 1.6" opacity="0.55"/>
<path d="M533 265 L588 224" fill="none" stroke="#7aa548" stroke-width="1.6" opacity="0.45"/>
</g>
</g>
<rect x="362.60" y="289.20" width="11.80" height="11.60" fill="#fdfdfd" rx="1.6" stroke="#d2d2d2" stroke-width="0.8"/>
<rect x="376.80" y="289.20" width="12.00" height="11.60" fill="#fdfdfd" rx="1.6" stroke="#d2d2d2" stroke-width="0.8"/>
<rect x="391.20" y="289.20" width="40.00" height="11.60" fill="#fdfdfd" rx="1.6" stroke="#d2d2d2" stroke-width="0.8"/>
<path d="M368.5 298.4 V291.4 M365.8 294 L368.5 291.3 L371.2 294" fill="none" stroke="#2b8fd8" stroke-width="0.9"/>
<path d="M382.8 291.4 V298.4 M380.1 295.8 L382.8 298.5 L385.5 295.8" fill="none" stroke="#2b8fd8" stroke-width="0.9"/>
<path d="M396.2 291.7 L402.4 297.9 M402.4 291.7 L396.2 297.9" fill="none" stroke="#e8434a" stroke-width="0.9"/>
<text x="405.60" y="297.10" font-size="6.35" fill="#262626" stroke="#262626" stroke-width="0.17" textLength="21.40" lengthAdjust="spacingAndGlyphs" >Remove</text>
<line x1="421.03" y1="298.05" x2="423.70" y2="298.05" stroke="#262626" stroke-width="0.55" />
<rect x="504.90" y="289.20" width="12.10" height="11.80" fill="#fdfdfd" rx="1.6" stroke="#d2d2d2" stroke-width="0.8"/>
<rect x="519.70" y="289.20" width="11.90" height="11.80" fill="#fdfdfd" rx="1.6" stroke="#d2d2d2" stroke-width="0.8"/>
<rect x="534.50" y="289.20" width="11.90" height="11.80" fill="#fdfdfd" rx="1.6" stroke="#d2d2d2" stroke-width="0.8"/>
<rect x="549.00" y="289.20" width="12.20" height="11.80" fill="#fdfdfd" rx="1.6" stroke="#d2d2d2" stroke-width="0.8"/>
<rect x="564.10" y="289.20" width="11.90" height="11.80" fill="#fdfdfd" rx="1.6" stroke="#d2d2d2" stroke-width="0.8"/>
<rect x="578.50" y="289.20" width="12.30" height="11.80" fill="#fdfdfd" rx="1.6" stroke="#d2d2d2" stroke-width="0.8"/>
<path d="M506.4 294 L515.8 298 H506.4 Z" fill="#e4e4e4" stroke="#3c3c3c" stroke-width="0.8" stroke-linejoin="round"/>
<path d="M514.8 295 V293 Q514.8 291.4 513 291.4 H510.8 M512 289.9 L510.4 291.4 L512 292.9" fill="none" stroke="#2b8fd8" stroke-width="1.1"/>
<path d="M530.4 294 L521 298 H530.4 Z" fill="#e4e4e4" stroke="#3c3c3c" stroke-width="0.8" stroke-linejoin="round"/>
<path d="M521.8 295 V293 Q521.8 291.4 523.6 291.4 H525.8 M524.6 289.9 L526.2 291.4 L524.6 292.9" fill="none" stroke="#2b8fd8" stroke-width="1.1"/>
<circle cx="539.6" cy="295.2" r="3.6" fill="#fafafa" stroke="#6a6a6a" stroke-width="0.7"/>
<path d="M539.6 291.6 A3.6 3.6 0 0 1 539.6 298.8 Z" fill="#a4a4a4"/>
<path d="M543.8 297.4 V291.4 M542.3 292.9 L543.8 291.4 L545.3 292.9" fill="none" stroke="#2b8fd8" stroke-width="1.1"/>
<circle cx="554.4" cy="295" r="3.6" fill="#c4c4c4" stroke="#6a6a6a" stroke-width="0.7"/>
<path d="M554.4 291.4 A3.6 3.6 0 0 1 554.4 298.6 Z" fill="#8e8e8e"/>
<path d="M558.4 293 V299 M556.9 297.5 L558.4 299 L559.9 297.5" fill="none" stroke="#2b8fd8" stroke-width="1.1"/>
<path d="M571.60 294.60 L573.30 294.60 M570.90 296.30 L572.10 297.50 M569.20 297.00 L569.20 298.70 M567.50 296.30 L566.30 297.50 M566.80 294.60 L565.10 294.60 M567.50 292.90 L566.30 291.70 M569.20 292.20 L569.20 290.50 M570.90 292.90 L572.10 291.70 " fill="none" stroke="#f08a24" stroke-width="0.9"/>
<circle cx="569.2" cy="294.6" r="1.9" fill="#f9b04a" stroke="#f08a24" stroke-width="0.5"/>
<path d="M573.2 299 V294.2 M571.8 295.6 L573.2 294.2 L574.6 295.6" fill="none" stroke="#2b8fd8" stroke-width="1.1"/>
<path d="M586.00 294.60 L587.70 294.60 M585.30 296.30 L586.50 297.50 M583.60 297.00 L583.60 298.70 M581.90 296.30 L580.70 297.50 M581.20 294.60 L579.50 294.60 M581.90 292.90 L580.70 291.70 M583.60 292.20 L583.60 290.50 M585.30 292.90 L586.50 291.70 " fill="none" stroke="#f08a24" stroke-width="0.9"/>
<circle cx="583.6" cy="294.6" r="1.9" fill="#f9b04a" stroke="#f08a24" stroke-width="0.5"/>
<path d="M587.6 294.2 V299 M586.2 297.6 L587.6 299 L589 297.6" fill="none" stroke="#2b8fd8" stroke-width="1.1"/>
<text x="264.50" y="324.50" font-size="6.35" fill="#262626" stroke="#262626" stroke-width="0.17" textLength="39.50" lengthAdjust="spacingAndGlyphs" >Picture layout:</text>
<line x1="264.60" y1="325.45" x2="268.56" y2="325.45" stroke="#262626" stroke-width="0.55" />
<rect x="310.00" y="317.90" width="148.80" height="9.30" fill="#fff" stroke="#b4b4b4" stroke-width="0.7"/>
<text x="311.90" y="324.50" font-size="6.35" fill="#262626" stroke="#262626" stroke-width="0.17" textLength="29.20" lengthAdjust="spacingAndGlyphs" >Fit to slide</text>
<path d="M453.6 321.8 L455.4 323.6 L457.2 321.8" fill="none" stroke="#444" stroke-width="0.8"/>
<text x="264.50" y="336.40" font-size="6.35" fill="#8e8e8e" stroke="#8e8e8e" stroke-width="0.17" textLength="37.10" lengthAdjust="spacingAndGlyphs" >Frame shape:</text>
<line x1="273.62" y1="337.35" x2="278.43" y2="337.35" stroke="#8e8e8e" stroke-width="0.55" />
<rect x="310.00" y="329.70" width="148.80" height="8.60" fill="#F2F2F2" stroke="#c4c4c4" stroke-width="0.7"/>
<text x="311.90" y="336.40" font-size="6.35" fill="#8e8e8e" stroke="#8e8e8e" stroke-width="0.17" textLength="27.70" lengthAdjust="spacingAndGlyphs" >Rectangle</text>
<path d="M453.6 333.2 L455.4 335 L457.2 333.2" fill="none" stroke="#777" stroke-width="0.8"/>
<text x="264.50" y="348.20" font-size="6.35" fill="#262626" stroke="#262626" stroke-width="0.17" textLength="19.90" lengthAdjust="spacingAndGlyphs" >Theme:</text>
<line x1="264.60" y1="349.15" x2="267.99" y2="349.15" stroke="#262626" stroke-width="0.55" />
<rect x="310.00" y="341.20" width="102.60" height="10.70" fill="#fff" rx="1" stroke="#c4c4c4" stroke-width="0.7"/>
<rect x="418.90" y="341.90" width="38.50" height="10.30" fill="#fdfdfd" rx="1.6" stroke="#d2d2d2" stroke-width="0.8"/>
<text x="425.10" y="349.40" font-size="6.35" fill="#262626" stroke="#262626" stroke-width="0.17" textLength="25.20" lengthAdjust="spacingAndGlyphs" >Browse...</text>
<line x1="425.20" y1="350.35" x2="429.03" y2="350.35" stroke="#262626" stroke-width="0.55" />
<g clip-path="url(#cpLay)">
<rect x="505.00" y="317.00" width="45.00" height="36.00" fill="url(#sky)"/>
<g filter="url(#blur1)">
<rect x="505" y="317" width="34" height="24" filter="url(#clouds)"/>
<path d="M505 344.8 L512 341 L518 339.4 L524 341.6 L530 339.6 L534 342 V345 Z" fill="#4f86b8"/>
<path d="M505 345 L514 342.6 L522 343 L531 340.6 L538 338 L545 333.6 L549.5 335.4 V345.4 Z" fill="#2f6f3c"/>
<rect x="505.00" y="344.80" width="45.00" height="8.20" fill="#1f558c"/>
<rect x="505.00" y="344.80" width="45.00" height="1.60" fill="#3a78ae"/>
</g>
</g>
<rect x="509.40" y="368.30" width="39.00" height="10.90" fill="#fdfdfd" rx="1.6" stroke="#2f86e0" stroke-width="0.9"/>
<text x="519.70" y="376.30" font-size="6.35" fill="#262626" stroke="#262626" stroke-width="0.17" textLength="18.10" lengthAdjust="spacingAndGlyphs" >Create</text>
<line x1="519.80" y1="377.25" x2="523.95" y2="377.25" stroke="#262626" stroke-width="0.55" />
<rect x="555.90" y="368.80" width="38.10" height="10.40" fill="#fdfdfd" rx="1.6" stroke="#d2d2d2" stroke-width="0.8"/>
<text x="565.60" y="376.30" font-size="6.35" fill="#262626" stroke="#262626" stroke-width="0.17" textLength="18.50" lengthAdjust="spacingAndGlyphs" >Cancel</text>
<g filter="url(#shr)">
<rect x="61.60" y="24.90" width="32.60" height="21.30" fill="none" stroke="#f21a1c" stroke-width="1.2"/>
<rect x="136.80" y="47.00" width="28.00" height="38.90" fill="none" stroke="#f21a1c" stroke-width="1.2"/>
<rect x="137.80" y="85.90" width="92.00" height="20.20" fill="none" stroke="#f21a1c" stroke-width="1.2"/>
<rect x="262.00" y="196.70" width="57.20" height="14.90" fill="none" stroke="#f21a1c" stroke-width="1.2"/>
<rect x="509.60" y="363.40" width="37.40" height="21.00" fill="none" stroke="#f21a1c" stroke-width="1.2"/>
<line x1="230.80" y1="105.20" x2="295.40" y2="158.60" stroke="#f41414" stroke-width="1.8" />
<path d="M303.2 164.6 L290.2 161 L295 158.5 L296.5 154.1 Z" fill="#f41414"/>
</g>
<rect x="808.00" y="0.00" width="1.00" height="405.00" fill="#f6f6f6"/>
<rect x="808.80" y="0.00" width="1.20" height="405.00" fill="#6c7275"/>
<rect x="808.80" y="0.00" width="1.20" height="27.00" fill="#7c9096"/>
</svg>
</body></html>
